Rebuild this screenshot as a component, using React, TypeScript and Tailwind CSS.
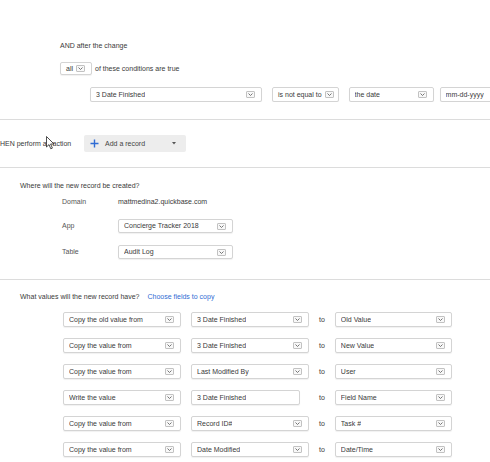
import type { ReactNode } from 'react';

function Chevron() {
  return (
    <span className="flex h-[7px] w-[9px] shrink-0 items-center justify-center rounded-[1px] border border-[#c2c2c2] bg-[#f8f8f8]">
      <svg width="5" height="3" viewBox="0 0 5 3" className="block">
        <path d="M0.5 0.5 L2.5 2.5 L4.5 0.5" fill="none" stroke="#666" strokeWidth="0.9" />
      </svg>
    </span>
  );
}

function Select({
  children,
  className = '',
  tight = false,
}: {
  children: ReactNode;
  className?: string;
  tight?: boolean;
}) {
  return (
    <div
      className={`flex shrink-0 items-center rounded-[2px] border border-[#d4d4d4] bg-white pl-[5px] shadow-[0_1px_1px_rgba(0,0,0,0.06)] ${
        tight ? 'gap-[3px] pr-[4px]' : 'justify-between pr-[6px]'
      } ${className}`}
    >
      <span className={tight ? 'whitespace-nowrap' : 'truncate'}>{children}</span>
      <Chevron />
    </div>
  );
}

function Input({ children, className = '' }: { children: ReactNode; className?: string }) {
  return (
    <div
      className={`flex shrink-0 items-center rounded-[2px] border border-[#d4d4d4] bg-white pl-[5px] shadow-[0_1px_1px_rgba(0,0,0,0.06)] ${className}`}
    >
      <span className="truncate">{children}</span>
    </div>
  );
}

const mappings: { action: string; source: string; target: string; input?: boolean }[] = [
  { action: 'Copy the old value from', source: '3 Date Finished', target: 'Old Value' },
  { action: 'Copy the value from', source: '3 Date Finished', target: 'New Value' },
  { action: 'Copy the value from', source: 'Last Modified By', target: 'User' },
  { action: 'Write the value', source: '3 Date Finished', target: 'Field Name', input: true },
  { action: 'Copy the value from', source: 'Record ID#', target: 'Task #' },
  { action: 'Copy the value from', source: 'Date Modified', target: 'Date/Time' },
];

export default function App() {
  return (
    <div
      className="h-[462px] w-[490px] overflow-hidden bg-white text-[7px] leading-[10px] text-[#3a3a3a]"
      style={{ fontFamily: '"Liberation Sans", Arial, sans-serif' }}
    >
      {/* condition block */}
      <div className="border-b border-[#dcdcdc] pb-[17px] pt-[41px]">
        <p className="pl-[60px]">AND after the change</p>
        <div className="mt-[11px] flex items-center gap-[3px] pl-[60px]">
          <Select tight className="h-[13px] w-[32px]">
            all
          </Select>
          <span>of these conditions are true</span>
        </div>
        <div className="mt-[12px] flex items-center overflow-hidden pl-[90px]">
          <Select className="h-[15px] w-[172px]">3 Date Finished</Select>
          <Select tight className="ml-[10px] h-[15px]">
            is not equal to
          </Select>
          <Select className="ml-[10px] h-[15px] w-[85px]">the date</Select>
          <Input className="ml-[6px] h-[15px] w-[70px]">mm-dd-yyyy</Input>
        </div>
      </div>

      {/* action block */}
      <div className="relative flex items-center border-b border-[#dcdcdc] py-[15px]">
        <span className="w-[84px] shrink-0">HEN perform an action</span>
        <button
          type="button"
          className="flex h-[17px] w-[102px] items-center rounded-[2px] bg-[#ededed] pl-[6px] pr-[10px] text-[7px] text-[#444]"
        >
          <svg width="9" height="9" viewBox="0 0 9 9" className="mr-[6px] shrink-0">
            <path d="M4.5 0.5 V8.5 M0.5 4.5 H8.5" stroke="#2f6cd4" strokeWidth="1.4" />
          </svg>
          <span>Add a record</span>
          <svg width="4" height="3" viewBox="0 0 4 3" className="ml-auto">
            <path d="M0 0 H4 L2 2.5 Z" fill="#555" />
          </svg>
        </button>
        <svg
          width="9"
          height="14"
          viewBox="0 0 9 14"
          className="absolute left-[46px] top-[16px]"
        >
          <path
            d="M0.5 0.5 L0.5 11 L3 8.6 L4.8 12.8 L6.4 12.1 L4.6 8 L8 8 Z"
            fill="#fff"
            stroke="#222"
            strokeWidth="0.8"
            strokeLinejoin="round"
          />
        </svg>
      </div>

      {/* destination block */}
      <div className="border-b border-[#dcdcdc] pb-[20px] pt-[13px]">
        <p className="pl-[20px]">Where will the new record be created?</p>
        <div className="mt-[6px] grid grid-cols-[56px_1fr] items-center gap-y-[12px] pl-[62px]">
          <span className="text-[#555]">Domain</span>
          <span>mattmedina2.quickbase.com</span>
          <span className="text-[#555]">App</span>
          <Select className="h-[14px] w-[115px]">Concierge Tracker 2018</Select>
          <span className="text-[#555]">Table</span>
          <Select className="h-[14px] w-[115px]">Audit Log</Select>
        </div>
      </div>

      {/* field mappings */}
      <div className="pt-[12px]">
        <p className="flex pl-[20px]">
          <span>What values will the new record have?</span>
          <a className="ml-[8px] text-[#2f6cd4]" href="#">
            Choose fields to copy
          </a>
        </p>
        <div className="mt-[10px] flex flex-col gap-[11px] pl-[63px]">
          {mappings.map((m, i) => (
            <div key={i} className="flex h-[15px] items-center">
              <Select className="h-[15px] w-[118px]">{m.action}</Select>
              {m.input ? (
                <Input className="ml-[10px] h-[15px] w-[109px]">{m.source}</Input>
              ) : (
                <Select className="ml-[10px] h-[15px] w-[118px]">{m.source}</Select>
              )}
              <span className={m.input ? 'ml-[19px]' : 'ml-[10px]'}>to</span>
              <Select className="ml-[10px] h-[15px] w-[117px]">{m.target}</Select>
            </div>
          ))}
        </div>
      </div>
    </div>
  );
}
